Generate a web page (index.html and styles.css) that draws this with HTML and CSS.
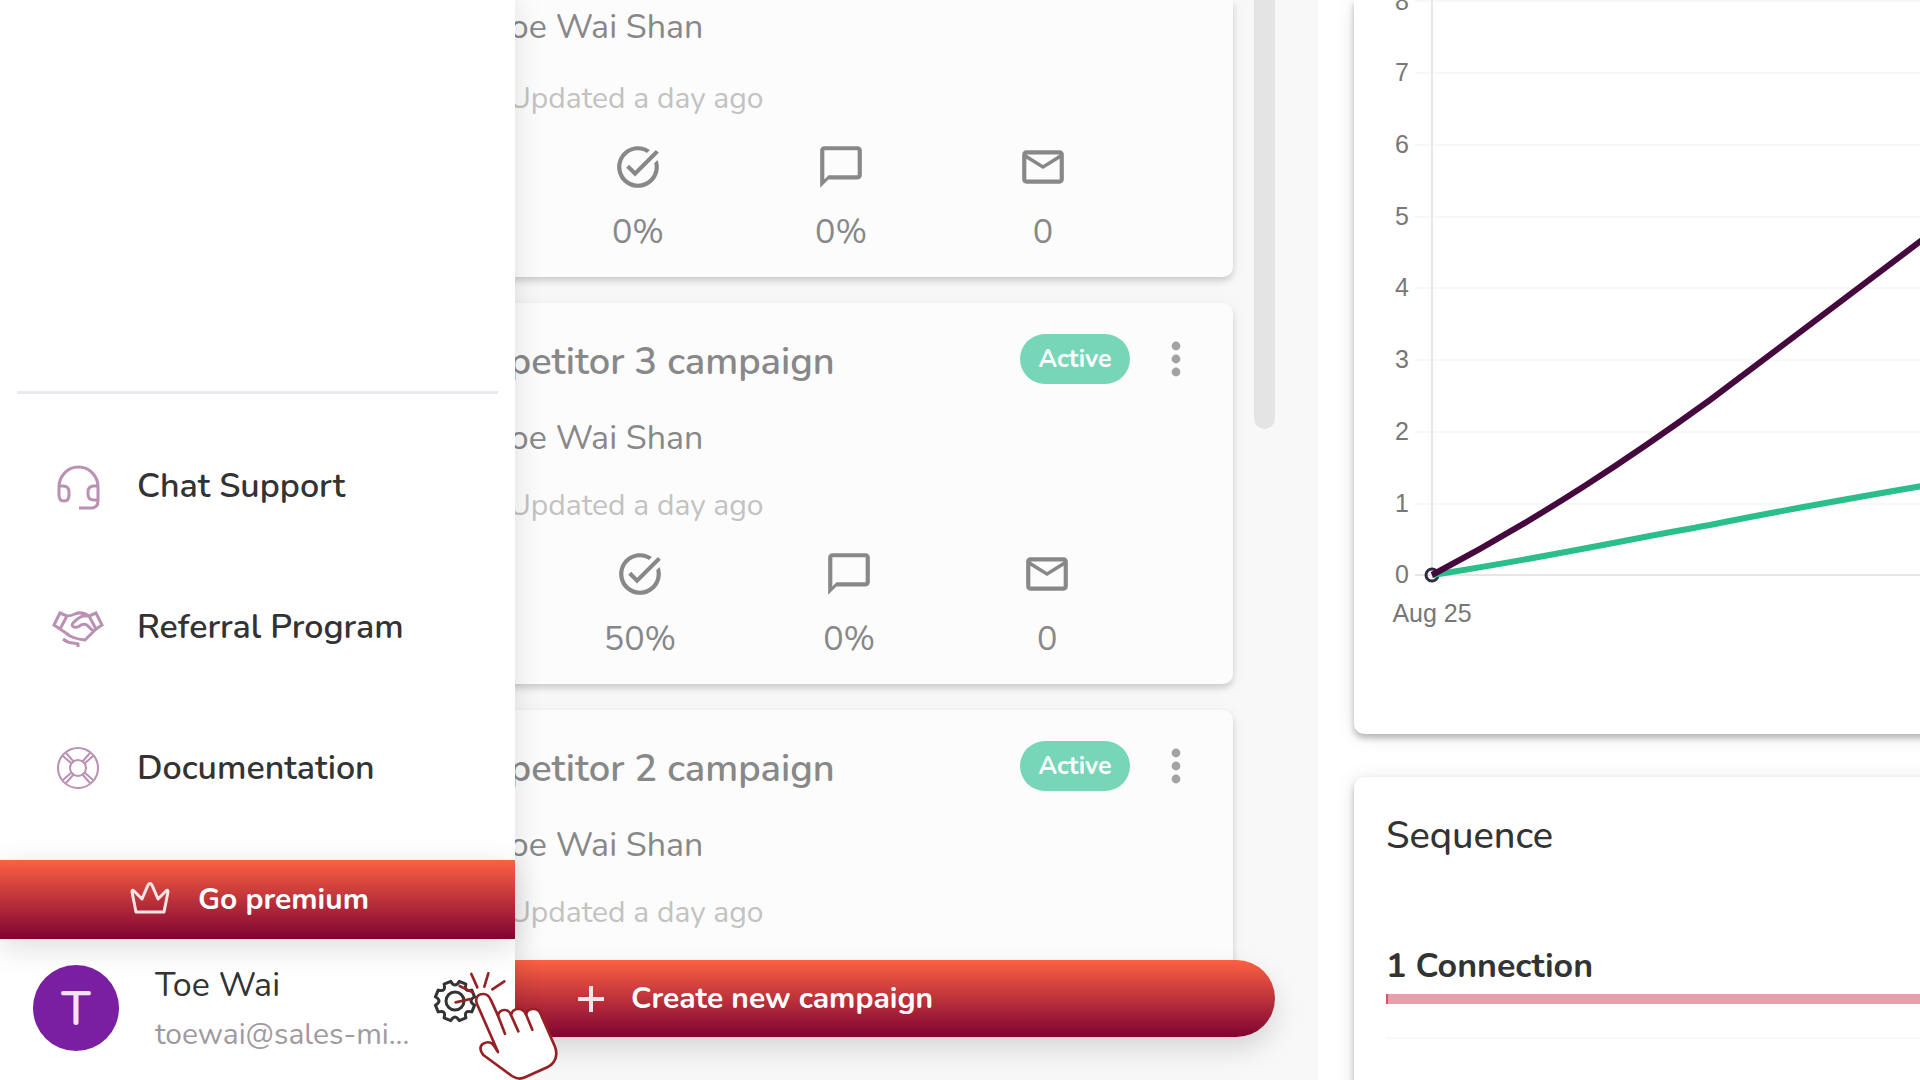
FILE: index.html
```html
<!DOCTYPE html>
<html lang="en">
<head>
    <meta charset="UTF-8">
    <meta name="viewport" content="width=device-width, initial-scale=1.0">
    <title>Campaigns</title>
    <link rel="stylesheet" href="styles.css">
</head>
<body>
    <!-- shared icons -->
    <svg class="icon-defs" aria-hidden="true">
        <symbol id="icon-check" viewBox="0 0 24 24">
            <path d="M22 5.18L10.59 16.6l-4.24-4.24 1.41-1.41 2.83 2.83 10-10L22 5.18zm-2.21 5.04c.13.57.21 1.17.21 1.78 0 4.42-3.58 8-8 8s-8-3.58-8-8 3.58-8 8-8c1.58 0 3.04.46 4.28 1.25l1.44-1.44C16.1 2.67 14.13 2 12 2 6.48 2 2 6.48 2 12s4.48 10 10 10 10-4.48 10-10c0-1.19-.22-2.33-.6-3.39l-1.61 1.61z"/>
        </symbol>
        <symbol id="icon-chat" viewBox="0 0 24 24">
            <path d="M20 2H4c-1.1 0-2 .9-2 2v18l4-4h14c1.1 0 2-.9 2-2V4c0-1.1-.9-2-2-2zm0 14H6l-2 2V4h16v12z"/>
        </symbol>
        <symbol id="icon-mail" viewBox="0 0 24 24">
            <path d="M22 6c0-1.1-.9-2-2-2H4c-1.1 0-2 .9-2 2v12c0 1.1.9 2 2 2h16c1.1 0 2-.9 2-2V6zm-2 0l-8 5-8-5h16zm0 12H4V8l8 5 8-5v10z"/>
        </symbol>
        <symbol id="icon-dots" viewBox="0 0 24 24">
            <circle cx="12" cy="5.5" r="2.2"/>
            <circle cx="12" cy="12" r="2.2"/>
            <circle cx="12" cy="18.5" r="2.2"/>
        </symbol>
    </svg>

    <div class="page">
        <section class="campaigns">
            <div class="campaign-list">
                <article class="card campaign campaign-first">
                    <p class="owner">Toe Wai Shan</p>
                    <p class="updated">Updated a day ago</p>
                    <div class="stats">
                        <div class="stat"></div>
                        <div class="stat"><svg><use href="#icon-check"/></svg><span>0%</span></div>
                        <div class="stat"><svg><use href="#icon-chat"/></svg><span>0%</span></div>
                        <div class="stat"><svg><use href="#icon-mail"/></svg><span>0</span></div>
                    </div>
                </article>

                <article class="card campaign">
                    <header class="campaign-header">
                        <h2>Competitor 3 campaign</h2>
                        <span class="badge">Active</span>
                        <button class="more" type="button" aria-label="More"><svg><use href="#icon-dots"/></svg></button>
                    </header>
                    <p class="owner">Toe Wai Shan</p>
                    <p class="updated">Updated a day ago</p>
                    <div class="stats">
                        <div class="stat"></div>
                        <div class="stat"><svg><use href="#icon-check"/></svg><span>50%</span></div>
                        <div class="stat"><svg><use href="#icon-chat"/></svg><span>0%</span></div>
                        <div class="stat"><svg><use href="#icon-mail"/></svg><span>0</span></div>
                    </div>
                </article>

                <article class="card campaign">
                    <header class="campaign-header">
                        <h2>Competitor 2 campaign</h2>
                        <span class="badge">Active</span>
                        <button class="more" type="button" aria-label="More"><svg><use href="#icon-dots"/></svg></button>
                    </header>
                    <p class="owner">Toe Wai Shan</p>
                    <p class="updated">Updated a day ago</p>
                    <div class="stats">
                        <div class="stat"></div>
                        <div class="stat"><svg><use href="#icon-check"/></svg></div>
                        <div class="stat"><svg><use href="#icon-chat"/></svg></div>
                        <div class="stat"></div>
                    </div>
                </article>
            </div>
            <div class="scrollbar"></div>
            <button class="create" type="button">
                <svg viewBox="0 0 26 26"><path d="M13 0v26M0 13h26"/></svg>
                <span>Create new campaign</span>
            </button>
        </section>

        <main class="details">
            <section class="card chart-card">
                <svg class="chart" role="img" aria-label="Campaign activity">
                    <g class="grid">
                        <line x1="61" x2="100%" y1="1" y2="1"/>
                        <line x1="61" x2="100%" y1="73" y2="73"/>
                        <line x1="61" x2="100%" y1="145" y2="145"/>
                        <line x1="61" x2="100%" y1="217" y2="217"/>
                        <line x1="61" x2="100%" y1="288" y2="288"/>
                        <line x1="61" x2="100%" y1="360" y2="360"/>
                        <line x1="61" x2="100%" y1="432" y2="432"/>
                        <line x1="61" x2="100%" y1="504" y2="504"/>
                    </g>
                    <g class="axis">
                        <line x1="61" x2="100%" y1="575" y2="575"/>
                        <line x1="78" x2="78" y1="0" y2="575"/>
                    </g>
                    <g class="labels">
                        <text x="48" y="10">8</text>
                        <text x="48" y="81">7</text>
                        <text x="48" y="153">6</text>
                        <text x="48" y="225">5</text>
                        <text x="48" y="296">4</text>
                        <text x="48" y="368">3</text>
                        <text x="48" y="440">2</text>
                        <text x="48" y="512">1</text>
                        <text x="48" y="583">0</text>
                        <text x="78" y="622">Aug 25</text>
                    </g>
                    <circle class="point" cx="78" cy="575" r="6"/>
                    <path class="line-green" d="M78 575C190 558 280 538 356 525C430 510 510 496 580 484"/>
                    <path class="line-purple" d="M78 575C190 516 280 455 356 400C430 345 510 283 580 231"/>
                </svg>
            </section>

            <section class="card sequence">
                <h2>Sequence</h2>
                <h3>1 Connection</h3>
                <div class="bar"></div>
                <hr>
            </section>
        </main>
    </div>

    <aside class="sidebar">
        <nav>
            <a href="#">
                <svg viewBox="0 0 52 52">
                    <path d="M7 36V27a19.5 20 0 0 1 39 0v14q0 7-7 7H27M7 26h4q6 0 6 6v3q0 6-5 6t-5-6v-9M46 26h-4q-6 0-6 6v2q0 6 6 6h4"/>
                </svg>
                Chat Support
            </a>
            <a href="#">
                <svg viewBox="0 0 52 52">
                    <path d="M8 12l7 3-7 13-6-4zM44 12l-7 3 7 13 6-4zM15 15q4 0 8-2 6-3 14 2M8 28q6 4 10 7 6 3 15 4l11-11M36 15h-5q-4 1-10 7-2 3 1 4 4 1 7-2 4-2 7 1l5 5M11 38q5 4 10 4l5 1v3"/>
                </svg>
                Referral Program
            </a>
            <a href="#">
                <svg class="thin" viewBox="0 0 52 52">
                    <circle cx="26" cy="26" r="20"/>
                    <circle cx="26" cy="26" r="8"/>
                    <path d="M11 14l9 8M14 11l8 9M38 11l-8 9M41 14l-9 8M11 38l9-8M14 41l8-9M38 41l-8-9M41 38l-9-8"/>
                </svg>
                Documentation
            </a>
        </nav>
        <button class="premium" type="button">
            <svg viewBox="0 0 40 34"><path d="M6 31L2 11q0-3 2-1l8 8 6-14q2-3 4 0l6 14 8-8q2-2 2 1l-4 20z"/></svg>
            <span>Go premium</span>
        </button>
        <div class="profile">
            <div class="avatar">T</div>
            <div class="user">
                <div class="user-name">Toe Wai</div>
                <div class="user-email">toewai@sales-mi...</div>
            </div>
            <button class="settings" type="button" aria-label="Settings">
                <svg viewBox="0 0 44 44">
                    <path d="M26.2 2.4L32.9 5.2Q30.7 13.3 38.8 11.1L41.6 17.8Q34.4 22 41.6 26.2L38.8 32.9Q30.7 30.7 32.9 38.8L26.2 41.6Q22 34.4 17.8 41.6L11.1 38.8Q13.3 30.7 5.2 32.9L2.4 26.2Q9.6 22 2.4 17.8L5.2 11.1Q13.3 13.3 11.1 5.2L17.8 2.4Q22 9.6 26.2 2.4Z"/>
                    <circle cx="22" cy="22" r="9"/>
                </svg>
            </button>
        </div>
    </aside>

    <!-- click pointer -->
    <svg class="pointer" viewBox="60 120 390 330" aria-hidden="true">
        <path class="hand" d="M264 366L252 338L201 222C194 205 203 192 218 192C231 191 238 199 242 209L264 257C266 246 273 240 284 240C294 240 299 245 303 255C306 243 314 237 325 237C337 237 343 242 348 253C351 242 358 237 370 237C381 237 388 242 392 252L435 350C444 373 437 398 415 410L345 442C330 449 318 446 306 438L220 375C208 362 209 347 220 341C234 333 246 338 252 347Z"/>
        <path d="M264 257L285 311M303 255L325 304M348 253L367 299"/>
        <path d="M184 132L202 172M235 130L223 170M283 154L247 178M149 168L188 187M137 217L181 207"/>
    </svg>
</body>
</html>
```
FILE: styles.css
```css
* {
    box-sizing: border-box;
}
body {
    margin: 0;
    height: 100vh;
    overflow: hidden;
    position: relative;
    font-family: Nunito, "Noto Sans", sans-serif;
    color: #333;
    background: #fff;
}
h2, h3, p {
    margin: 0;
}
button {
    border: none;
    padding: 0;
    background: none;
    font-family: inherit;
    cursor: pointer;
}
.icon-defs {
    display: none;
}
.page {
    display: grid;
    grid-template-columns: 1fr 602px;
    height: 100%;
}
.card {
    border-radius: 10px;
    background: #fff;
    box-shadow: 0 4px 6px rgba(0,0,0,0.25), 0 2px 20px rgba(0,0,0,0.1);
}

/* campaigns */
.campaigns {
    position: relative;
    height: 100vh;
    overflow: hidden;
    background: #f8f8f8;
    padding: 0 0 80px;
}
.campaign-list {
    display: flex;
    flex-direction: column;
    gap: 26px;
    height: 100%;
    overflow: hidden;
    padding: 0 85px 0 246px;
}
.campaign {
    flex: none;
    height: 381px;
    padding: 31px 14px 0;
    background: #fcfcfc;
    color: #888;
    box-shadow: 0 4px 6px rgba(0,0,0,0.15), 0 2px 16px rgba(0,0,0,0.05);
}
.campaign-first {
    height: 277px;
    padding-top: 5px;
    border-top-left-radius: 0;
    border-top-right-radius: 0;
}
.campaign-header {
    display: flex;
    align-items: center;
    height: 50px;
    margin-bottom: 32px;
    padding: 0 19px 0 170px;
}
.campaign-header h2 {
    flex: 1;
    padding-top: 6px;
    font-size: 38px;
    line-height: 44px;
    font-weight: 600;
    white-space: nowrap;
}
.badge {
    width: 110px;
    border-radius: 25px;
    background: #77d6b7;
    color: #fff;
    font-size: 25px;
    line-height: 50px;
    font-weight: 700;
    text-align: center;
}
.more {
    width: 48px;
    height: 48px;
    margin-left: 22px;
}
.more svg {
    width: 48px;
    height: 48px;
    fill: #a3a3a3;
}
.owner {
    padding-left: 232px;
    margin-bottom: 24px;
    font-size: 34px;
    line-height: 44px;
}
.campaign-first .owner {
    margin-bottom: 28px;
}
.updated {
    padding-left: 249px;
    margin-bottom: 21px;
    color: #c2c2c2;
    font-size: 30px;
    line-height: 44px;
}
.stats {
    display: flex;
    justify-content: space-evenly;
}
.stat {
    display: flex;
    flex-direction: column;
    align-items: center;
    gap: 18px;
    min-width: 50px;
    font-size: 34px;
    line-height: 44px;
}
.stat svg {
    width: 50px;
    height: 50px;
    fill: #888;
}
.scrollbar {
    position: absolute;
    top: -20px;
    right: 43px;
    width: 21px;
    height: 449px;
    border-radius: 11px;
    background: #e4e4e4;
}
.create {
    position: absolute;
    left: 246px;
    right: 43px;
    bottom: 43px;
    display: flex;
    align-items: center;
    gap: 27px;
    height: 77px;
    padding-left: 332px;
    border-radius: 39px;
    background: linear-gradient(#fc6143, #7f0432);
    box-shadow: 0 12px 28px rgba(0,0,0,0.14);
    color: #fff;
    font-size: 30px;
    font-weight: 700;
}
.create svg {
    width: 26px;
    height: 26px;
    stroke: #f6e4e8;
    stroke-width: 4;
}

/* details */
.details {
    overflow: hidden;
    padding-left: 36px;
}
.chart-card {
    height: 734px;
    margin: 0 -20px 43px 0;
    border-top-left-radius: 0;
}
.chart {
    display: block;
    width: 100%;
    height: 640px;
}
.grid line {
    stroke: #f8f8f8;
    stroke-width: 2;
}
.axis line {
    stroke: #e6e6e6;
    stroke-width: 2;
}
.labels text {
    fill: #777;
    font-family: "Liberation Sans", Arial, sans-serif;
    font-size: 25px;
    text-anchor: middle;
}
.point {
    fill: none;
    stroke: #2f2b45;
    stroke-width: 3;
}
.line-green {
    fill: none;
    stroke: #2abf8a;
    stroke-width: 6;
}
.line-purple {
    fill: none;
    stroke: #45093d;
    stroke-width: 6;
}
.sequence {
    height: 400px;
    margin-right: -20px;
    padding: 37px 0 0 32px;
}
.sequence h2 {
    margin-bottom: 86px;
    font-size: 38px;
    line-height: 44px;
    font-weight: 500;
}
.sequence h3 {
    margin-bottom: 6px;
    font-size: 34px;
    line-height: 44px;
    font-weight: 700;
}
.bar {
    height: 10px;
    border-left: 2px solid #d4506c;
    background: #e89fab;
}
.sequence hr {
    margin: 33px 0 0;
    border: none;
    border-top: 2px solid #f8f8f8;
}

/* sidebar */
.sidebar {
    position: absolute;
    top: 0;
    left: 0;
    bottom: 0;
    width: 515px;
    display: flex;
    flex-direction: column;
    justify-content: flex-end;
    background: #fff;
    box-shadow: 0 0 28px rgba(0,0,0,0.12);
}
.sidebar nav {
    margin: 0 17px;
    padding: 21px 0 22px;
    border-top: 3px solid #e9e9ef;
}
.sidebar nav a {
    display: flex;
    align-items: center;
    gap: 33px;
    height: 141px;
    padding-left: 35px;
    color: #333;
    font-size: 34px;
    font-weight: 600;
    text-decoration: none;
}
.sidebar nav svg {
    width: 52px;
    height: 52px;
    fill: none;
    stroke: #ba90b4;
    stroke-width: 3;
}
.sidebar nav .thin {
    stroke-width: 2;
}
.premium {
    display: flex;
    align-items: center;
    justify-content: center;
    gap: 28px;
    height: 79px;
    padding-right: 16px;
    background: linear-gradient(#fc6143, #7f0432);
    box-shadow: 0 8px 32px rgba(0,0,0,0.14);
    color: #fff;
    font-size: 30px;
    font-weight: 700;
}
.premium svg {
    width: 40px;
    height: 34px;
    margin-bottom: 4px;
    fill: none;
    stroke: #fbe6e6;
    stroke-width: 3;
    stroke-linejoin: round;
}
.profile {
    display: flex;
    align-items: center;
    height: 141px;
    padding: 0 38px 0 33px;
}
.avatar {
    width: 86px;
    height: 86px;
    margin: 0 36px 4px 0;
    border-radius: 50%;
    background: #7b1fa2;
    color: #f0e4f5;
    font-size: 48px;
    line-height: 88px;
    font-weight: 600;
    text-align: center;
}
.user {
    flex: 1;
}
.user-name {
    font-size: 34px;
    line-height: 50px;
}
.user-email {
    color: #a09aa0;
    font-size: 30px;
    line-height: 50px;
}
.settings {
    width: 44px;
    height: 44px;
    margin-bottom: 18px;
}
.settings svg {
    width: 44px;
    height: 44px;
    fill: none;
    stroke: #333;
    stroke-width: 3;
    stroke-linejoin: round;
}
.pointer {
    position: absolute;
    left: 430px;
    bottom: 0;
    width: 130px;
    height: 110px;
    fill: none;
    stroke: #962124;
    stroke-width: 8;
    stroke-linecap: round;
    stroke-linejoin: round;
}
.pointer .hand {
    fill: #fff;
}
```
